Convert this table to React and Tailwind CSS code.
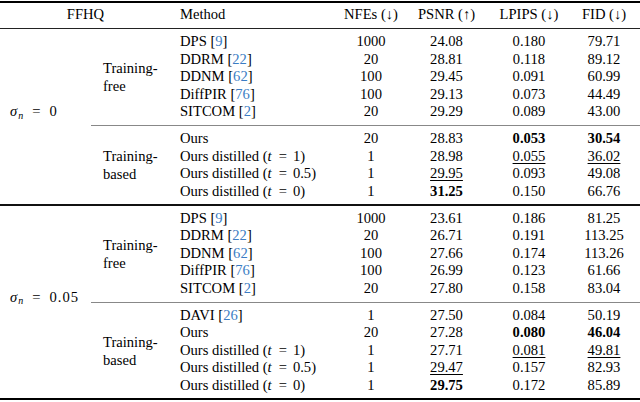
import React from 'react';

const CITE = 'text-[#3b7dc4]';
const ROW = 'grid grid-cols-[155px_72px_79px_86px_64px] h-[17.5px] leading-[17.5px]';

const groups = [
  {
    sigma: '0',
    sigmaPad: 'pt-[70px]',
    subs: [
      {
        label: ['Training-', 'free'],
        rows: [
          { name: 'DPS', cite: '9', v: ['1000', '24.08', '0.180', '79.71'] },
          { name: 'DDRM', cite: '22', v: ['20', '28.81', '0.118', '89.12'] },
          { name: 'DDNM', cite: '62', v: ['100', '29.45', '0.091', '60.99'] },
          { name: 'DiffPIR', cite: '76', v: ['100', '29.13', '0.073', '44.49'] },
          { name: 'SITCOM', cite: '2', v: ['20', '29.29', '0.089', '43.00'] },
        ],
      },
      {
        label: ['Training-', 'based'],
        rows: [
          { name: 'Ours', v: ['20', '28.83', 'b:0.053', 'b:30.54'] },
          { name: 'Ours distilled', t: '1', v: ['1', '28.98', 'u:0.055', 'u:36.02'] },
          { name: 'Ours distilled', t: '0.5', v: ['1', 'u:29.95', '0.093', '49.08'] },
          { name: 'Ours distilled', t: '0', v: ['1', 'b:31.25', '0.150', '66.76'] },
        ],
      },
    ],
  },
  {
    sigma: '0.05',
    sigmaPad: 'pt-[78.75px]',
    subs: [
      {
        label: ['Training-', 'free'],
        rows: [
          { name: 'DPS', cite: '9', v: ['1000', '23.61', '0.186', '81.25'] },
          { name: 'DDRM', cite: '22', v: ['20', '26.71', '0.191', '113.25'] },
          { name: 'DDNM', cite: '62', v: ['100', '27.66', '0.174', '113.26'] },
          { name: 'DiffPIR', cite: '76', v: ['100', '26.99', '0.123', '61.66'] },
          { name: 'SITCOM', cite: '2', v: ['20', '27.80', '0.158', '83.04'] },
        ],
      },
      {
        label: ['Training-', 'based'],
        rows: [
          { name: 'DAVI', cite: '26', v: ['1', '27.50', '0.084', '50.19'] },
          { name: 'Ours', v: ['20', '27.28', 'b:0.080', 'b:46.04'] },
          { name: 'Ours distilled', t: '1', v: ['1', '27.71', 'u:0.081', 'u:49.81'] },
          { name: 'Ours distilled', t: '0.5', v: ['1', 'u:29.47', '0.157', '82.93'] },
          { name: 'Ours distilled', t: '0', v: ['1', 'b:29.75', '0.172', '85.89'] },
        ],
      },
    ],
  },
];

const Val = ({ v }) => {
  if (v.startsWith('b:')) return <span className="font-bold">{v.slice(2)}</span>;
  if (v.startsWith('u:'))
    return <span className="underline decoration-1 underline-offset-[2px]">{v.slice(2)}</span>;
  return <span>{v}</span>;
};

const Method = ({ name, cite, t }) => (
  <span className="whitespace-nowrap">
    {name}
    {cite && (
      <> [<span className={CITE}>{cite}</span>]</>
    )}
    {t && (
      <> (<span className="italic mr-[1px]">t</span><span className="mx-[6px]">=</span>{t})</>
    )}
  </span>
);

const Rule = ({ line }) => (
  <div className="h-[9.5px] flex items-center">
    <div className={`w-full ${line}`} />
  </div>
);

const Sigma = ({ value }) => (
  <span className="whitespace-nowrap">
    <span className="italic">σ</span>
    <span className="italic text-[10px] relative top-[2.5px] ml-[1px]">n</span>
    <span className="mx-[9px]">=</span>
    <span className="tracking-[1px]">{value}</span>
  </span>
);

export default function App() {
  return (
    <div className="w-[640px] h-[402px] bg-white text-black font-['Liberation_Serif',serif] text-[14.6px] overflow-hidden">
      <div className="h-[1px]" />
      <div className="h-[1.5px] bg-black" />
      <div className="h-[3.75px]" />

      {/* header */}
      <div className="flex h-[17.5px] leading-[17.5px]">
        <div className="w-[171px] text-center">FFHQ</div>
        <div className="w-[9px]" />
        <div className={ROW}>
          <div>Method</div>
          <div className="text-center whitespace-nowrap">NFEs (↓)</div>
          <div className="text-center whitespace-nowrap">PSNR (↑)</div>
          <div className="text-center whitespace-nowrap">LPIPS (↓)</div>
          <div className="text-center whitespace-nowrap">FID (↓)</div>
        </div>
      </div>
      <Rule line="h-[1px] bg-[#222]" />

      {groups.map((g, gi) => (
        <div key={gi}>
          <div className="flex">
            <div className={`w-[91px] pl-[10px] ${g.sigmaPad}`}>
              <div className="h-[17.5px] leading-[17.5px]">
                <Sigma value={g.sigma} />
              </div>
            </div>
            <div className="flex-1 flex flex-col">
              {g.subs.map((s, si) => (
                <React.Fragment key={si}>
                  {si > 0 && <Rule line="h-[1px] bg-[#888]" />}
                  <div className="flex">
                    <div className="w-[89px] pl-[12px] flex flex-col justify-center leading-[18px]">
                      <div>{s.label[0]}</div>
                      <div>{s.label[1]}</div>
                    </div>
                    <div className="flex flex-col">
                      {s.rows.map((r, ri) => (
                        <div key={ri} className={ROW}>
                          <div>
                            <Method name={r.name} cite={r.cite} t={r.t} />
                          </div>
                          {r.v.map((v, vi) => (
                            <div key={vi} className="text-center">
                              <Val v={v} />
                            </div>
                          ))}
                        </div>
                      ))}
                    </div>
                  </div>
                </React.Fragment>
              ))}
            </div>
          </div>
          {gi === 0 && <Rule line="h-[1.2px] bg-[#111]" />}
        </div>
      ))}

      <div className="h-[3.5px]" />
      <div className="h-[2px] bg-black" />
    </div>
  );
}
